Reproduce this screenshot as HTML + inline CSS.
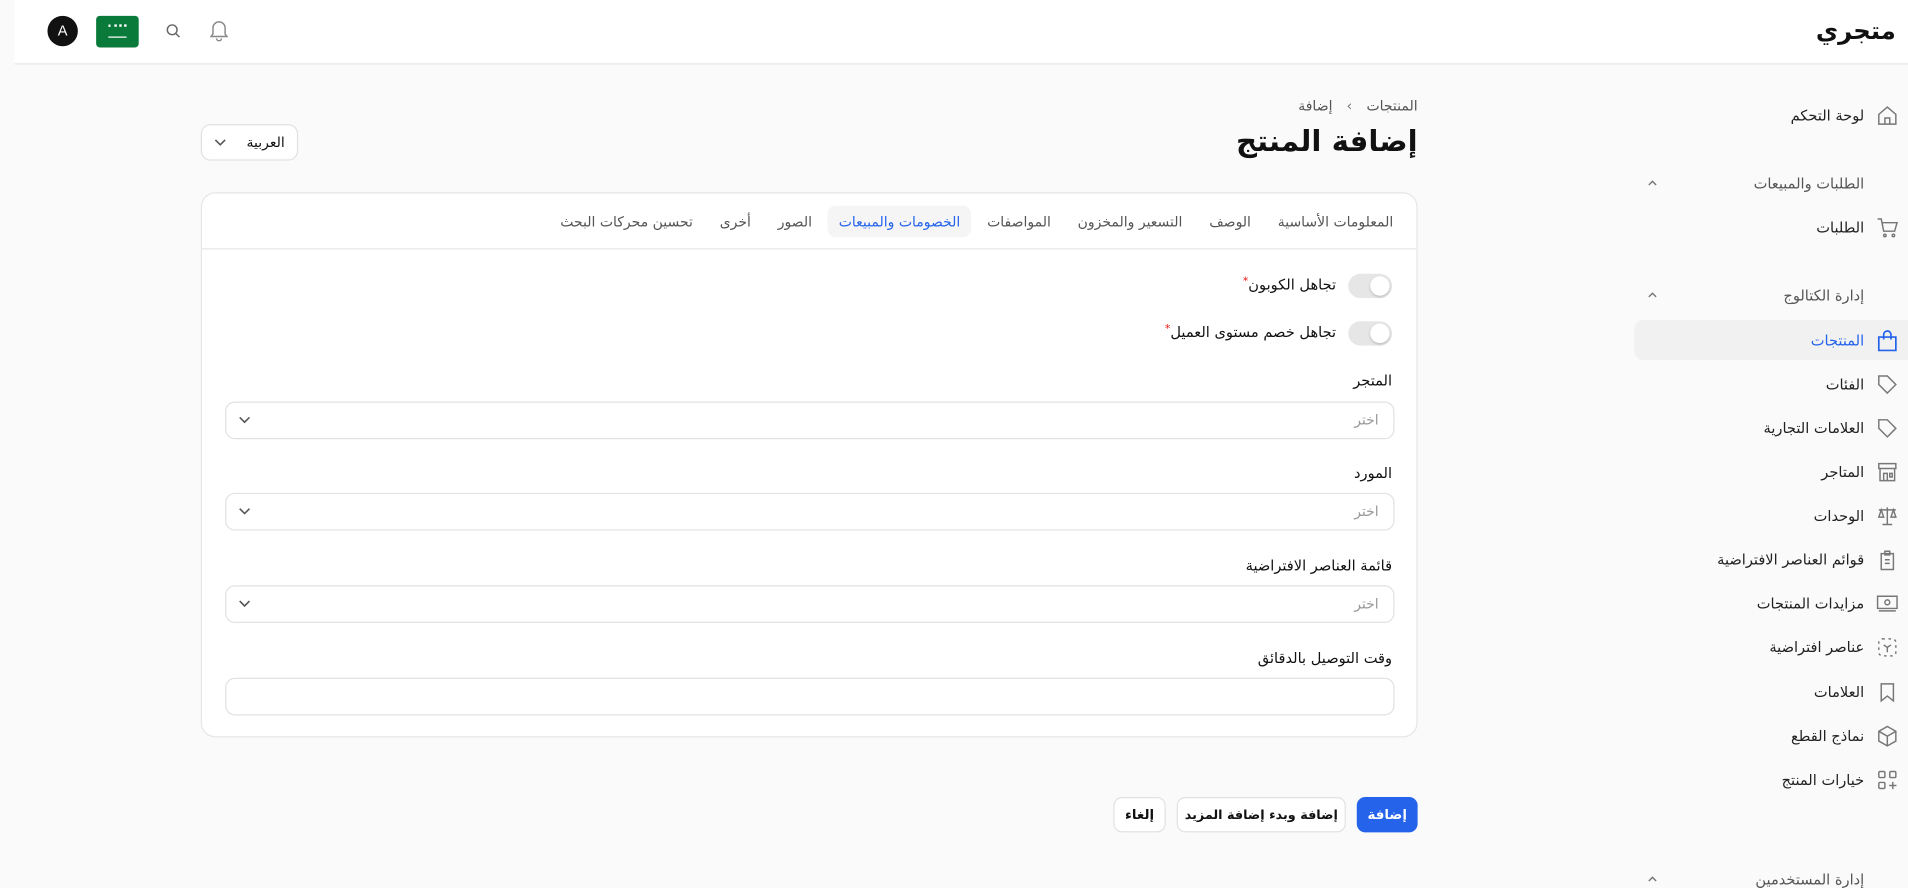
<!DOCTYPE html>
<html lang="ar" dir="rtl"><head><meta charset="utf-8">
<style>
*{box-sizing:border-box;margin:0;padding:0}
html,body{width:1908px;height:860px;overflow:hidden;background:#fafafa}
body{font-family:"DejaVu Sans","Liberation Sans",sans-serif;color:#111;font-size:12px}
#w{position:absolute;left:0;top:0;width:1568px;height:707px;transform:scale(1.21684);transform-origin:0 0}
.a{position:absolute;white-space:nowrap}
.hdr{position:absolute;left:12px;top:0;width:1556px;height:53px;background:#fff;border-bottom:1px solid #e6e6e6}
.side{font-size:12px;color:#222}
.side .t{position:absolute;right:36px;transform:translateY(-50%)}
.ic{position:absolute;left:1542px;width:18px;height:18px;transform:translateY(-50%)}
.grp{color:#555}
.card{position:absolute;left:165px;top:158px;width:1000px;height:448px;background:#fff;border:1px solid #e6e6e6;border-radius:12px}
.tabs{position:absolute;left:0;top:0;right:0;height:46px;border-bottom:1px solid #e6e6e6;display:flex;align-items:center;padding-right:10px;gap:4px;font-size:11.5px;color:#555}
.tab{padding:6px 9px;border-radius:7px;white-space:nowrap}
.tab.on{background:#f5f5f5;color:#2563eb}
.lbl{position:absolute;right:20px;font-size:12px;color:#111;white-space:nowrap}
.sel{position:absolute;left:19px;width:961px;height:31px;border:1px solid #e2e2e2;border-radius:8px;background:#fff}
.sel span{position:absolute;right:12px;top:7px;color:#999;font-size:11.5px}
.sel svg{position:absolute;left:10px;top:11px}
.tg{position:absolute;right:20px;width:36px;height:20px;border-radius:10px;background:#e6e6e6}
.tg:after{content:"";position:absolute;right:2px;top:2px;width:16px;height:16px;border-radius:50%;background:#fff;box-shadow:0 1px 2px rgba(0,0,0,.2)}
.btn{position:absolute;top:655px;height:29px;border-radius:7px;font-size:11px;font-weight:bold;display:flex;align-items:center;justify-content:center;border:1px solid #e2e2e2;background:#fff;white-space:nowrap}
</style></head><body><div id="w">
<div class="hdr"></div>
<div class="a" style="right:10px;top:13px;font-size:20px;font-weight:bold">متجري</div>
<div class="a" style="left:39px;top:13px;width:25px;height:25px;border-radius:50%;background:#111;color:#fff;font-size:12px;text-align:center;line-height:25px;font-family:'Liberation Sans',sans-serif">A</div>
<div class="a" style="left:79px;top:13px;width:35px;height:26px;border-radius:3px;background:#0a7a3b"><div style="position:absolute;left:10px;top:7px;width:15px;height:4px;border-top:2px dotted #fff"></div><div style="position:absolute;left:10px;top:17px;width:15px;height:1px;background:#fff"></div></div>
<svg class="a" style="left:136px;top:19px" width="13" height="13" viewBox="0 0 13 13" fill="none" stroke="#666" stroke-width="1.2"><circle cx="5.5" cy="5.5" r="4"/><path d="M8.5 8.5l3 3"/></svg>
<svg class="a" style="left:172px;top:16px" width="16" height="18" viewBox="0 0 16 18" fill="none" stroke="#888" stroke-width="1.2"><path d="M3 12V7a5 5 0 0110 0v5l1.5 2h-13z"/><path d="M6 15.5a2 2 0 004 0"/></svg>

<div class="side">
<svg class="ic" style="top:95px" viewBox="0 0 18 18" fill="none" stroke="#777" stroke-width="1.2"><path d="M2 8l7-6 7 6v8H2z"/><path d="M7 16v-5h4v5"/></svg>
<div class="t" style="top:95px">لوحة التحكم</div>
<div class="t grp" style="top:151px">الطلبات والمبيعات</div>
<svg class="a" style="left:1353px;top:146px" width="10" height="8" viewBox="0 0 10 8" fill="none" stroke="#777" stroke-width="1.2"><path d="M2 6l3-3 3 3"/></svg>
<svg class="ic" style="top:187px" viewBox="0 0 18 18" fill="none" stroke="#777" stroke-width="1.2"><path d="M1 2h3l2 10h9l2-7H5"/><circle cx="7" cy="15.5" r="1"/><circle cx="14" cy="15.5" r="1"/></svg>
<div class="t" style="top:187px">الطلبات</div>
<div class="t grp" style="top:243px">إدارة الكتالوج</div>
<svg class="a" style="left:1353px;top:238px" width="10" height="8" viewBox="0 0 10 8" fill="none" stroke="#777" stroke-width="1.2"><path d="M2 6l3-3 3 3"/></svg>
<div class="a" style="left:1343px;top:263px;width:552px;height:33px;background:#f1f1f1;border-radius:8px"></div>
<svg class="ic" style="top:280px" viewBox="0 0 18 18" fill="none" stroke="#2563eb" stroke-width="1.4"><path d="M2 6h14v11H2z"/><path d="M6 8V4a3 3 0 016 0v4"/></svg>
<div class="t" style="top:280px;color:#2563eb">المنتجات</div>
<svg class="ic" style="top:316px" viewBox="0 0 18 18" fill="none" stroke="#777" stroke-width="1.2"><path d="M2 2h7l7 7-7 7-7-7z"/></svg>
<div class="t" style="top:316px">الفئات</div>
<svg class="ic" style="top:352px" viewBox="0 0 18 18" fill="none" stroke="#777" stroke-width="1.2"><path d="M2 2h7l7 7-7 7-7-7z"/></svg>
<div class="t" style="top:352px">العلامات التجارية</div>
<svg class="ic" style="top:388px" viewBox="0 0 18 18" fill="none" stroke="#777" stroke-width="1.2"><path d="M2 2h14v4H2zM3 6v10h12V6M6 16v-6h3v6M11 10h2v3h-2z"/></svg>
<div class="t" style="top:388px">المتاجر</div>
<svg class="ic" style="top:424px" viewBox="0 0 18 18" fill="none" stroke="#777" stroke-width="1.2"><path d="M9 2v14M5 16h8M2 4h14M4 4l-2 6h4zM14 4l-2 6h4z"/></svg>
<div class="t" style="top:424px">الوحدات</div>
<svg class="ic" style="top:460px" viewBox="0 0 18 18" fill="none" stroke="#777" stroke-width="1.2"><path d="M4 4h10v13H4zM7 2h4v3H7zM7 9h4M7 12h4"/></svg>
<div class="t" style="top:460px">قوائم العناصر الافتراضية</div>
<svg class="ic" style="top:496px" viewBox="0 0 18 18" fill="none" stroke="#777" stroke-width="1.2"><path d="M1 3h16v10H1z"/><circle cx="9" cy="8" r="2"/><path d="M2 15h14"/></svg>
<div class="t" style="top:496px">مزايدات المنتجات</div>
<svg class="ic" style="top:532px" viewBox="0 0 18 18" fill="none" stroke="#777" stroke-width="1.2"><rect x="2" y="2" width="14" height="14" rx="3" stroke-dasharray="2 3"/><path d="M6 7l3 2 3-2M9 9v4"/></svg>
<div class="t" style="top:532px">عناصر افتراضية</div>
<svg class="ic" style="top:569px" viewBox="0 0 18 18" fill="none" stroke="#777" stroke-width="1.2"><path d="M4 2h10v14l-5-4-5 4z"/></svg>
<div class="t" style="top:569px">العلامات</div>
<svg class="ic" style="top:605px" viewBox="0 0 18 18" fill="none" stroke="#777" stroke-width="1.2"><path d="M9 1l7 4v8l-7 4-7-4V5zM2 5l7 4 7-4M9 9v8"/></svg>
<div class="t" style="top:605px">نماذج القطع</div>
<svg class="ic" style="top:641px" viewBox="0 0 18 18" fill="none" stroke="#777" stroke-width="1.2"><rect x="2" y="2" width="5" height="5" rx="1"/><rect x="11" y="2" width="5" height="5" rx="1"/><rect x="2" y="11" width="5" height="5" rx="1"/><path d="M13.5 10.5v6M10.5 13.5h6"/></svg>
<div class="t" style="top:641px">خيارات المنتج</div>
<div class="t grp" style="top:723px">إدارة المستخدمين</div>
<svg class="a" style="left:1353px;top:718px" width="10" height="8" viewBox="0 0 10 8" fill="none" stroke="#777" stroke-width="1.2"><path d="M2 6l3-3 3 3"/></svg>
</div>

<div class="a" style="right:403px;top:80px;font-size:11.5px;color:#555">المنتجات <span style="margin:0 8px;color:#777">&#x203A;</span> إضافة</div>
<div class="a" style="right:403px;top:102px;font-size:24px;font-weight:bold">إضافة المنتج</div>
<div class="a" style="left:165px;top:102px;width:80px;height:30px;border:1px solid #e2e2e2;border-radius:8px;background:#fff"><span style="position:absolute;right:10px;top:7px;font-size:11.5px">العربية</span><svg style="position:absolute;left:10px;top:11px" width="10" height="7" viewBox="0 0 10 7" fill="none" stroke="#555" stroke-width="1.3"><path d="M1 1l4 4 4-4"/></svg></div>

<div class="card">
 <div class="tabs">
  <div class="tab">المعلومات الأساسية</div>
  <div class="tab">الوصف</div>
  <div class="tab">التسعير والمخزون</div>
  <div class="tab">المواصفات</div>
  <div class="tab on">الخصومات والمبيعات</div>
  <div class="tab">الصور</div>
  <div class="tab">أخرى</div>
  <div class="tab">تحسين محركات البحث</div>
 </div>
 <div class="tg" style="top:66px"></div>
 <div class="lbl" style="right:66px;top:68px">تجاهل الكوبون<span style="color:#e11;font-size:9px;vertical-align:top">*</span></div>
 <div class="tg" style="top:105px"></div>
 <div class="lbl" style="right:66px;top:107px">تجاهل خصم مستوى العميل<span style="color:#e11;font-size:9px;vertical-align:top">*</span></div>
 <div class="lbl" style="top:147px">المتجر</div>
 <div class="sel" style="top:171px"><span>اختر</span><svg width="10" height="7" viewBox="0 0 10 7" fill="none" stroke="#555" stroke-width="1.3"><path d="M1 1l4 4 4-4"/></svg></div>
 <div class="lbl" style="top:223px">المورد</div>
 <div class="sel" style="top:246px"><span>اختر</span><svg width="10" height="7" viewBox="0 0 10 7" fill="none" stroke="#555" stroke-width="1.3"><path d="M1 1l4 4 4-4"/></svg></div>
 <div class="lbl" style="top:299px">قائمة العناصر الافتراضية</div>
 <div class="sel" style="top:322px"><span>اختر</span><svg width="10" height="7" viewBox="0 0 10 7" fill="none" stroke="#555" stroke-width="1.3"><path d="M1 1l4 4 4-4"/></svg></div>
 <div class="lbl" style="top:375px">وقت التوصيل بالدقائق</div>
 <div class="sel" style="top:398px"></div>
</div>

<div class="btn" style="left:1115px;width:50px;background:#2563eb;color:#fff;border-color:#2563eb">إضافة</div>
<div class="btn" style="left:967px;width:139px;font-size:10.5px">إضافة وبدء إضافة المزيد</div>
<div class="btn" style="left:915px;width:43px">إلغاء</div>
</div></body></html>
